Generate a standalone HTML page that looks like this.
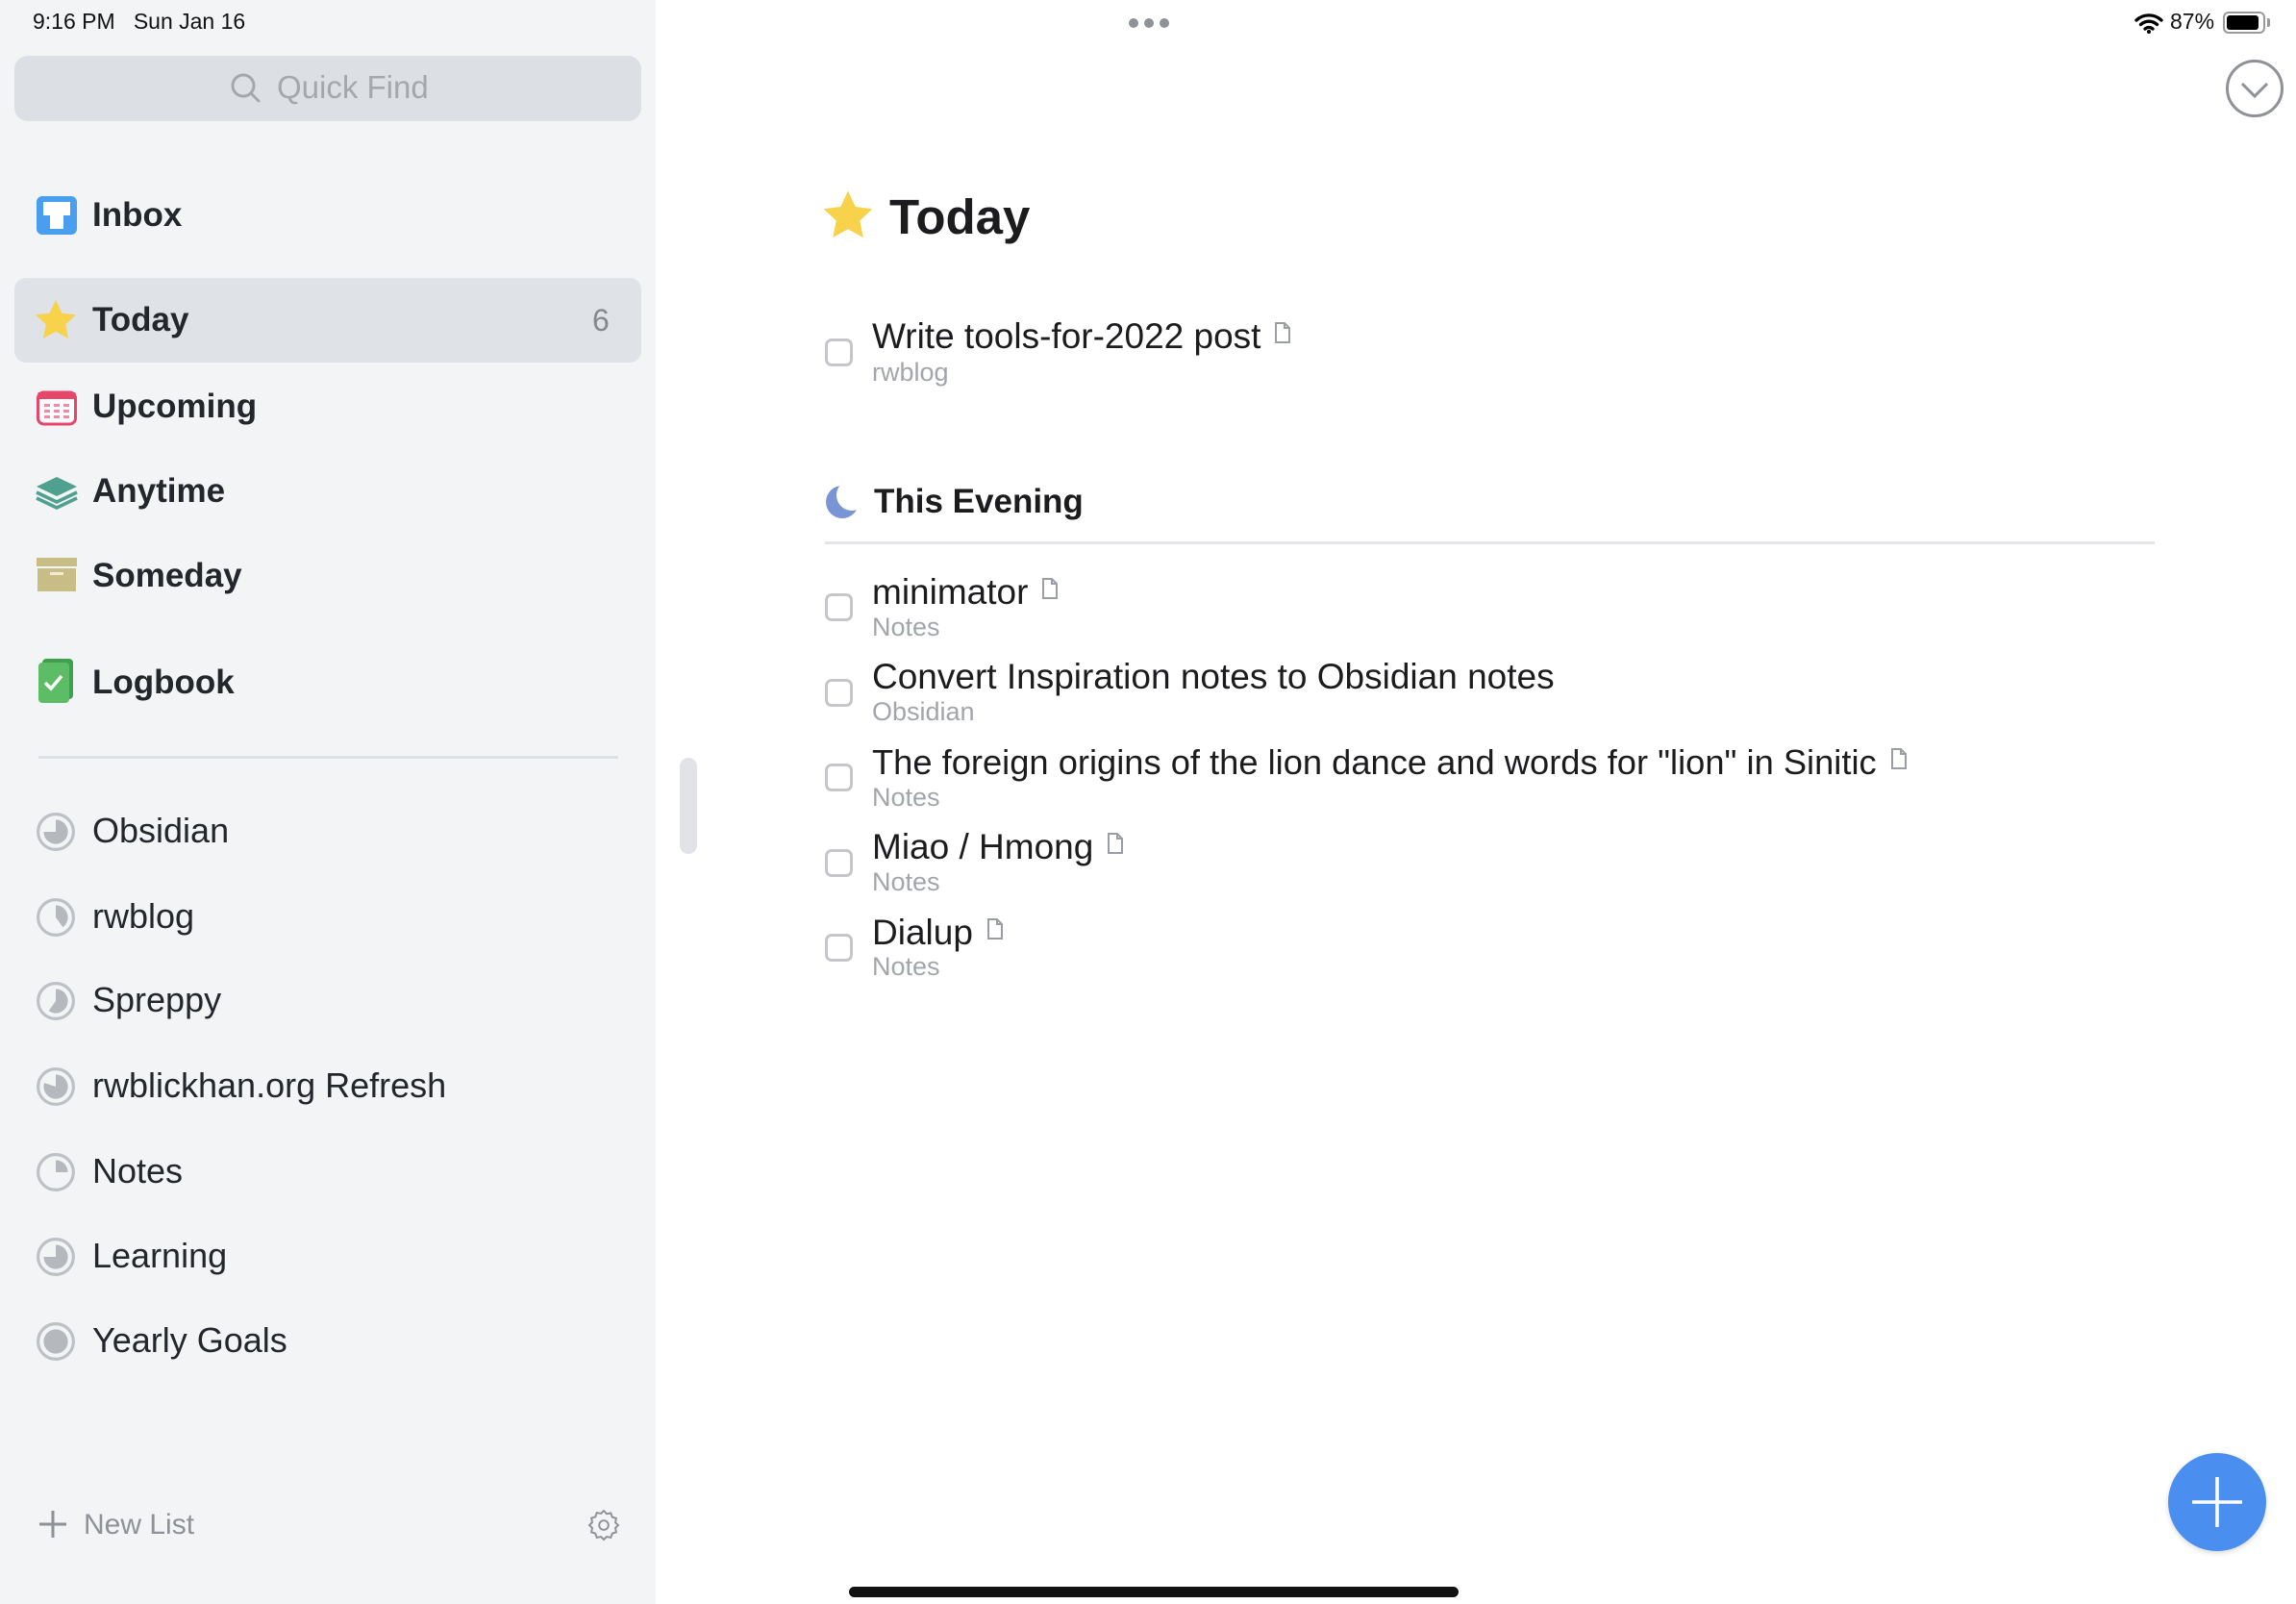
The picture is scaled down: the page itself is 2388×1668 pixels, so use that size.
<!DOCTYPE html>
<html><head><meta charset="utf-8"><style>
*{margin:0;padding:0;box-sizing:border-box}
body{width:2388px;height:1668px;position:relative;background:#fff;font-family:"Liberation Sans",sans-serif;overflow:hidden;color:#1c1c1e}
.abs{position:absolute}
#side{left:0;top:0;width:682px;height:1668px;background:#f2f4f6}
.nav{position:absolute;left:96px;font-size:35px;font-weight:bold;color:#23262b;line-height:40px}
.proj{position:absolute;left:96px;font-size:36px;color:#23262b;line-height:40px}
.pie{position:absolute;left:37px;width:42px;height:42px}
.cb{position:absolute;left:858px;width:29px;height:29px;border:3px solid #c4c6ca;border-radius:7px}
.tt{position:absolute;left:907px;font-size:37px;color:#1c1c1e;line-height:40px;white-space:nowrap}
.st{position:absolute;left:907px;font-size:27px;color:#a2a5aa;line-height:30px}
.doc{display:inline-block;vertical-align:top;margin-left:14px;margin-top:4px}
</style></head><body>
<div id="side" class="abs">
<div class="abs" style="left:34px;top:9px;font-size:23px;color:#111">9:16 PM&nbsp;&nbsp;&nbsp;Sun Jan 16</div>
<div class="abs" style="left:15px;top:58px;width:652px;height:68px;background:#dcdfe3;border-radius:14px"></div>
<svg class="abs" style="left:238px;top:74px" width="36" height="36" viewBox="0 0 36 36"><circle cx="15" cy="15" r="11" fill="none" stroke="#a4a7ac" stroke-width="3"/><line x1="23" y1="23" x2="31" y2="31" stroke="#a4a7ac" stroke-width="3" stroke-linecap="round"/></svg>
<div class="abs" style="left:288px;top:72px;font-size:33px;color:#a4a7ac">Quick Find</div>

<svg class="abs" style="left:38px;top:204px" width="42" height="42" viewBox="0 0 42 42"><rect x="0" y="0" width="42" height="40" rx="6" fill="#4a9ef0"/><path d="M7 6h28v14h-7v14h-14v-14h-7z" fill="#fff"/></svg>
<div class="nav" style="top:204px">Inbox</div>

<div class="abs" style="left:15px;top:289px;width:652px;height:88px;background:#dfe2e6;border-radius:12px"></div>
<svg class="abs" style="left:34px;top:310px" width="48" height="46" viewBox="0 0 24 23"><path d="M12 1l3.2 6.8 7.3.9-5.4 5 1.4 7.3L12 17.4 5.5 21l1.4-7.3-5.4-5 7.3-.9z" fill="#f7d24a"/></svg>
<div class="nav" style="top:313px">Today</div>
<div class="abs" style="left:616px;top:315px;font-size:32px;color:#85888d">6</div>

<svg class="abs" style="left:38px;top:405px" width="42" height="38" viewBox="0 0 42 38"><rect x="1.5" y="3" width="39" height="33" rx="6" fill="#fff" stroke="#e8456a" stroke-width="3"/><rect x="1.5" y="3" width="39" height="7" fill="#e8456a"/><g fill="#f08aa3"><rect x="8" y="15" width="6" height="3"/><rect x="18" y="15" width="6" height="3"/><rect x="28" y="15" width="6" height="3"/><rect x="8" y="21" width="6" height="3"/><rect x="18" y="21" width="6" height="3"/><rect x="28" y="21" width="6" height="3"/><rect x="8" y="27" width="6" height="3"/><rect x="18" y="27" width="6" height="3"/><rect x="28" y="27" width="6" height="3"/></g></svg>
<div class="nav" style="top:403px">Upcoming</div>

<svg class="abs" style="left:36px;top:490px" width="46" height="40" viewBox="0 0 46 40"><path d="M23 26L2 16 23 6l21 10z" fill="#4fa08e"/><path d="M2 22l21 10 21-10M2 28l21 10 21-10" fill="none" stroke="#4fa08e" stroke-width="3.5"/></svg>
<div class="nav" style="top:491px">Anytime</div>

<svg class="abs" style="left:38px;top:580px" width="42" height="36" viewBox="0 0 42 36"><rect x="0" y="0" width="42" height="9" fill="#c9bd86"/><rect x="1" y="11" width="40" height="24" fill="#c9bd86"/><rect x="14" y="15" width="14" height="3" fill="#f1ecd8"/></svg>
<div class="nav" style="top:579px">Someday</div>

<svg class="abs" style="left:38px;top:685px" width="40" height="46" viewBox="0 0 40 46"><rect x="6" y="0" width="32" height="42" rx="4" fill="#3fa04e"/><rect x="2" y="4" width="32" height="42" rx="4" fill="#5cbd66"/><path d="M9 25l6 6 11-13" fill="none" stroke="#fff" stroke-width="3.5"/></svg>
<div class="nav" style="top:690px">Logbook</div>

<div class="abs" style="left:40px;top:786px;width:603px;height:3px;background:#dcdfe3"></div>

<svg class="pie" style="top:844px" viewBox="0 0 40 40"><circle cx="20" cy="20" r="17.5" fill="none" stroke="#bdc0c4" stroke-width="3"/><path d="M20 20L20 8A12 12 0 1 1 8 20Z" fill="#b5b8bd"/></svg>
<div class="proj" style="top:844px">Obsidian</div>
<svg class="pie" style="top:933px" viewBox="0 0 40 40"><circle cx="20" cy="20" r="17.5" fill="none" stroke="#bdc0c4" stroke-width="3"/><path d="M20 20L20 8A12 12 0 0 1 27.05 29.7Z" fill="#b5b8bd"/></svg>
<div class="proj" style="top:933px">rwblog</div>
<svg class="pie" style="top:1020px" viewBox="0 0 40 40"><circle cx="20" cy="20" r="17.5" fill="none" stroke="#bdc0c4" stroke-width="3"/><path d="M20 20L20 8A12 12 0 1 1 12.95 29.7Z" fill="#b5b8bd"/></svg>
<div class="proj" style="top:1020px">Spreppy</div>
<svg class="pie" style="top:1109px" viewBox="0 0 40 40"><circle cx="20" cy="20" r="17.5" fill="none" stroke="#bdc0c4" stroke-width="3"/><path d="M20 20L20 8A12 12 0 1 1 8.59 16.29Z" fill="#b5b8bd"/></svg>
<div class="proj" style="top:1109px">rwblickhan.org Refresh</div>
<svg class="pie" style="top:1198px" viewBox="0 0 40 40"><circle cx="20" cy="20" r="17.5" fill="none" stroke="#bdc0c4" stroke-width="3"/><path d="M20 20L20 8A12 12 0 0 1 32 20Z" fill="#b5b8bd"/></svg>
<div class="proj" style="top:1198px">Notes</div>
<svg class="pie" style="top:1286px" viewBox="0 0 40 40"><circle cx="20" cy="20" r="17.5" fill="none" stroke="#bdc0c4" stroke-width="3"/><path d="M20 20L20 8A12 12 0 1 1 8 20Z" fill="#b5b8bd"/></svg>
<div class="proj" style="top:1286px">Learning</div>
<svg class="pie" style="top:1374px" viewBox="0 0 40 40"><circle cx="20" cy="20" r="17.5" fill="none" stroke="#bdc0c4" stroke-width="3"/><circle cx="20" cy="20" r="12" fill="#b5b8bd"/></svg>
<div class="proj" style="top:1374px">Yearly Goals</div>

<svg class="abs" style="left:40px;top:1570px" width="30" height="30" viewBox="0 0 30 30"><path d="M15 1v28M1 15h28" stroke="#8e9196" stroke-width="3"/></svg>
<div class="abs" style="left:87px;top:1569px;font-size:30px;color:#8e9196">New List</div>
<svg class="abs" style="left:610px;top:1568px" width="36" height="36" viewBox="0 0 24 24"><path d="M12 2l2 2.2 2.9-.6.9 2.8 2.8.9-.6 2.9L22 12l-2 2 .6 2.9-2.8.9-.9 2.8-2.9-.6L12 22l-2-2-2.9.6-.9-2.8-2.8-.9.6-2.9L2 12l2-2-.6-2.9 2.8-.9.9-2.8 2.9.6z" fill="none" stroke="#8e9196" stroke-width="1.3"/><circle cx="12" cy="12" r="3.2" fill="none" stroke="#8e9196" stroke-width="1.3"/></svg>
</div>
<div class="abs" style="left:707px;top:788px;width:18px;height:100px;background:#e1e3e6;border-radius:9px"></div>

<div class="abs" style="left:1174px;top:19px;width:10px;height:10px;border-radius:5px;background:#8e9196;box-shadow:16px 0 0 #8e9196,32px 0 0 #8e9196"></div>
<svg class="abs" style="left:2220px;top:12px" width="30" height="24" viewBox="0 0 30 24"><path d="M2 9a19 19 0 0 1 26 0M6.5 13.5a12.5 12.5 0 0 1 17 0M11 18a6 6 0 0 1 8 0" fill="none" stroke="#000" stroke-width="3.3" stroke-linecap="round"/><circle cx="15" cy="21" r="2" fill="#000"/></svg>
<div class="abs" style="left:2257px;top:9px;font-size:23px;color:#111">87%</div>
<div class="abs" style="left:2312px;top:12px;width:44px;height:23px;border:2px solid #999;border-radius:6px;padding:2px"><div style="width:33px;height:15px;background:#000;border-radius:3px"></div></div>
<div class="abs" style="left:2358px;top:19px;width:3px;height:9px;background:#999;border-radius:0 2px 2px 0"></div>
<svg class="abs" style="left:2314px;top:61px" width="62" height="62" viewBox="0 0 62 62"><circle cx="31" cy="31" r="28.5" fill="none" stroke="#8e9196" stroke-width="3"/><path d="M18 26l13 13 13-13" fill="none" stroke="#8e9196" stroke-width="3"/></svg>

<svg class="abs" style="left:853px;top:196px" width="58" height="56" viewBox="0 0 24 23"><path d="M12 1l3.2 6.8 7.3.9-5.4 5 1.4 7.3L12 17.4 5.5 21l1.4-7.3-5.4-5 7.3-.9z" fill="#f7d24a"/></svg>
<div class="abs" style="left:925px;top:196px;font-size:51px;font-weight:bold;color:#1c1c1e">Today</div>

<div class="cb" style="top:352px"></div>
<div class="tt" style="top:330px">Write tools-for-2022 post<svg class="doc" width="18" height="24" viewBox="0 0 18 24"><path d="M2 2h9l5 5v15H2z M11 2v5h5" fill="none" stroke="#9a9da2" stroke-width="2"/></svg></div>
<div class="st" style="top:372px">rwblog</div>

<svg class="abs" style="left:858px;top:502px" width="36" height="40" viewBox="0 0 36 40"><circle cx="18" cy="20" r="17" fill="#7a95d6"/><circle cx="28" cy="13" r="16" fill="#fff"/></svg>
<div class="abs" style="left:909px;top:502px;font-size:35px;font-weight:bold;color:#1c1c1e">This Evening</div>
<div class="abs" style="left:858px;top:563px;width:1383px;height:3px;background:#e3e5e8"></div>

<div class="cb" style="top:617px"></div>
<div class="tt" style="top:596px">minimator<svg class="doc" width="18" height="24" viewBox="0 0 18 24"><path d="M2 2h9l5 5v15H2z M11 2v5h5" fill="none" stroke="#9a9da2" stroke-width="2"/></svg></div>
<div class="st" style="top:637px">Notes</div>

<div class="cb" style="top:706px"></div>
<div class="tt" style="top:684px">Convert Inspiration notes to Obsidian notes</div>
<div class="st" style="top:725px">Obsidian</div>

<div class="cb" style="top:794px"></div>
<div class="tt" style="top:773px;font-size:36.3px">The foreign origins of the lion dance and words for "lion" in Sinitic<svg class="doc" width="18" height="24" viewBox="0 0 18 24"><path d="M2 2h9l5 5v15H2z M11 2v5h5" fill="none" stroke="#9a9da2" stroke-width="2"/></svg></div>
<div class="st" style="top:814px">Notes</div>

<div class="cb" style="top:883px"></div>
<div class="tt" style="top:861px">Miao / Hmong<svg class="doc" width="18" height="24" viewBox="0 0 18 24"><path d="M2 2h9l5 5v15H2z M11 2v5h5" fill="none" stroke="#9a9da2" stroke-width="2"/></svg></div>
<div class="st" style="top:902px">Notes</div>

<div class="cb" style="top:971px"></div>
<div class="tt" style="top:950px">Dialup<svg class="doc" width="18" height="24" viewBox="0 0 18 24"><path d="M2 2h9l5 5v15H2z M11 2v5h5" fill="none" stroke="#9a9da2" stroke-width="2"/></svg></div>
<div class="st" style="top:990px">Notes</div>

<div class="abs" style="left:2255px;top:1511px;width:102px;height:102px;border-radius:51px;background:#4a8ff0;box-shadow:0 2px 6px rgba(0,0,0,.15)"></div>
<svg class="abs" style="left:2276px;top:1532px" width="60" height="60" viewBox="0 0 60 60"><path d="M30 4v52M4 30h52" stroke="#fff" stroke-width="3.5"/></svg>
<div class="abs" style="left:883px;top:1650px;width:634px;height:11px;border-radius:6px;background:#111"></div>
</body></html>
